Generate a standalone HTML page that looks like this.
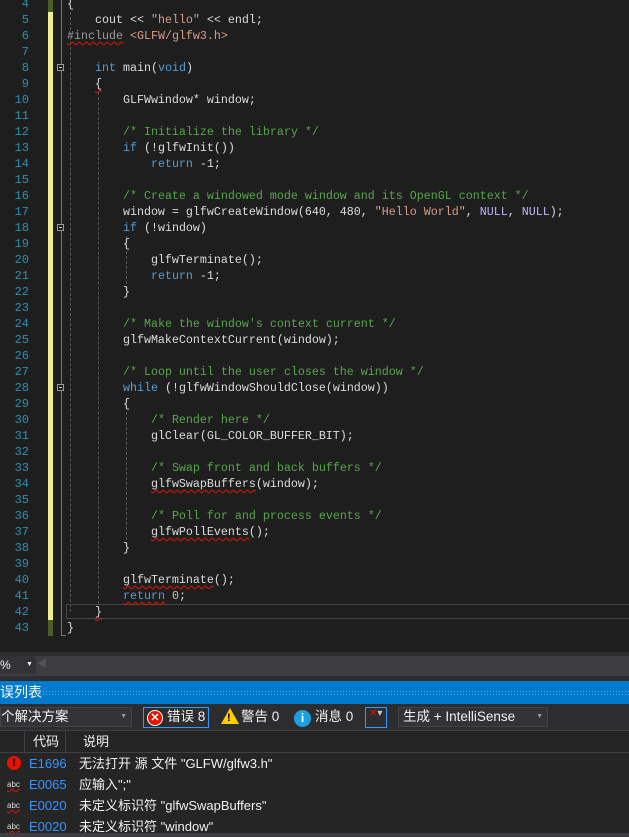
<!DOCTYPE html>
<html><head><meta charset="utf-8"><style>
body{margin:0;width:629px;height:837px;overflow:hidden;background:#1e1e1e;font-family:"Liberation Sans","Noto Sans CJK SC",sans-serif;position:relative}
.ed{position:absolute;left:0;top:0;width:629px;height:652px;overflow:hidden;background:#1e1e1e}
.ln{position:absolute;left:0;width:29px;text-align:right;color:#2b91af;font:12px/16px "Liberation Mono",monospace}
.cd{position:absolute;left:67px;white-space:pre;color:#dcdcdc;font:11.67px/16px "Liberation Mono",monospace}
.k{color:#569cd6}.s{color:#d69d85}.c{color:#57a64a}.p{color:#9b9b9b}.m{color:#beb7ff}.n{color:#b5cea8}
.sq{text-decoration:underline wavy #e51400;text-decoration-thickness:1px;text-underline-offset:2px}
.fold{position:absolute;left:57px;width:7px;height:7px;border:1px solid #999;box-sizing:border-box}
.fold:after{content:"";position:absolute;left:1px;top:2px;width:3px;height:1px;background:#ccc}
.g{position:absolute;width:0;border-left:1px dashed #555}
.row{position:absolute;left:0;width:629px;height:21px;font-size:13px;color:#f1f1f1;line-height:21px}
.code{position:absolute;left:29px;color:#3794ff}
.desc{position:absolute;left:79px}
</style></head><body>
<div class="ed">
<div style="position:absolute;left:48px;top:0;width:5px;height:12px;background:#4b5e2a"></div>
<div style="position:absolute;left:48px;top:12px;width:5px;height:608px;background:#efef91"></div>
<div style="position:absolute;left:48px;top:620px;width:5px;height:16px;background:#4b5e2a"></div>
<div style="position:absolute;left:61px;top:0;width:1px;height:636px;background:#777"></div>
<div style="position:absolute;left:61px;top:635px;width:5px;height:1px;background:#777"></div>
<div class="g" style="left:70px;top:12px;height:600px"></div>
<div class="g" style="left:98px;top:92px;height:512px"></div>
<div class="g" style="left:126px;top:236px;height:48px"></div>
<div class="g" style="left:126px;top:412px;height:128px"></div>
<div style="position:absolute;left:66px;top:604px;width:570px;height:15px;border:1px solid #464646;box-sizing:border-box"></div>
<div class="fold" style="top:64px;background:#1e1e1e"></div>
<div class="fold" style="top:224px;background:#1e1e1e"></div>
<div class="fold" style="top:384px;background:#1e1e1e"></div>
<div class="ln" style="top:-4px">4<br>5<br>6<br>7<br>8<br>9<br>10<br>11<br>12<br>13<br>14<br>15<br>16<br>17<br>18<br>19<br>20<br>21<br>22<br>23<br>24<br>25<br>26<br>27<br>28<br>29<br>30<br>31<br>32<br>33<br>34<br>35<br>36<br>37<br>38<br>39<br>40<br>41<br>42<br>43</div>
<div class="cd" style="top:-4px">{
    cout &lt;&lt; <span class="s">"hello"</span> &lt;&lt; endl;
<span class="p sq">#include</span> <span class="s">&lt;GLFW/glfw3.h&gt;</span>

    <span class="k">int</span> main(<span class="k">void</span>)
    <span class="sq">{</span>
        GLFWwindow* window;

        <span class="c">/* Initialize the library */</span>
        <span class="k">if</span> (!glfwInit())
            <span class="k">return</span> -1;

        <span class="c">/* Create a windowed mode window and its OpenGL context */</span>
        window = glfwCreateWindow(640, 480, <span class="s">"Hello World"</span>, <span class="m">NULL</span>, <span class="m">NULL</span>);
        <span class="k">if</span> (!window)
        {
            glfwTerminate();
            <span class="k">return</span> -1;
        }

        <span class="c">/* Make the window's context current */</span>
        glfwMakeContextCurrent(window);

        <span class="c">/* Loop until the user closes the window */</span>
        <span class="k">while</span> (!glfwWindowShouldClose(window))
        {
            <span class="c">/* Render here */</span>
            glClear(GL_COLOR_BUFFER_BIT);

            <span class="c">/* Swap front and back buffers */</span>
            <span class="sq">glfwSwapBuffers</span>(window);

            <span class="c">/* Poll for and process events */</span>
            <span class="sq">glfwPollEvents</span>();
        }

        <span class="sq">glfwTerminate</span>();
        <span class="k sq">return</span> <span class="n">0</span>;
    <span class="sq">}</span>
}</div>
</div>
<div style="position:absolute;left:0;top:652px;width:629px;height:4px;background:#2d2d30"></div>
<div style="position:absolute;left:0;top:656px;width:629px;height:20px;background:#3e3e42"></div>
<div style="position:absolute;left:0;top:656px;width:36px;height:18px;background:#333337;color:#f1f1f1;font-size:12px;line-height:18px">%<span style="position:absolute;left:26px;font-size:7px">▼</span></div>
<div style="position:absolute;left:37px;top:656px;color:#555;font-size:10px;line-height:18px">◀</div>
<div style="position:absolute;left:0;top:676px;width:629px;height:5px;background:#2d2d30"></div>
<div style="position:absolute;left:0;top:681px;width:629px;height:23px;background:#007acc;color:#fff;font-size:14px;line-height:23px">误列表<div style="position:absolute;left:30px;right:0;top:9px;height:5px;background-image:radial-gradient(#5aa8dd 0.6px,transparent 0.7px);background-size:3px 3px"></div></div>
<div style="position:absolute;left:0;top:704px;width:629px;height:26px;background:#2d2d30;color:#f1f1f1;font-size:13.5px;line-height:26px">
<div style="position:absolute;left:0;top:3px;width:132px;height:20px;background:#333337;border:1px solid #434346;box-sizing:border-box;line-height:18px">个解决方案<span style="position:absolute;right:4px;font-size:7px;color:#999">▼</span></div>
<div style="position:absolute;top:3px;height:21px;border:1px solid #3399ff;box-sizing:border-box;left:143px;width:66px"></div>
<div style="position:absolute;left:147px;top:6px;width:16px;height:16px;border-radius:50%;background:#e51400;border:1px solid #fff;box-sizing:border-box;color:#fff;font-size:11px;line-height:14px;text-align:center;font-weight:bold">✕</div>
<span style="position:absolute;left:167px">错误 8</span>
<div style="position:absolute;left:221px;top:4px;width:0;height:0;border-left:9px solid transparent;border-right:9px solid transparent;border-bottom:16px solid #ffcc00"></div>
<span style="position:absolute;left:227px;top:1px;font-size:11px;font-weight:bold;color:#000">!</span>
<span style="position:absolute;left:241px">警告 0</span>
<div style="position:absolute;top:6px;width:17px;height:17px;border-radius:50%;background:#1ba1e2;color:#fff;font-size:12px;line-height:17px;text-align:center;font-weight:bold;left:294px">i</div>
<span style="position:absolute;left:315px">消息 0</span>
<div style="position:absolute;left:365px;top:3px;width:22px;height:21px;border:1px solid #3399ff;box-sizing:border-box;color:#e51400;font-size:10px;line-height:12px;padding-left:3px">✕<span style="color:#ccc">▾</span></div>
<div style="position:absolute;left:398px;top:3px;width:150px;height:20px;background:#333337;border:1px solid #434346;box-sizing:border-box;line-height:18px;padding-left:4px">生成 + IntelliSense<span style="position:absolute;right:4px;font-size:7px;color:#999">▼</span></div>
</div>
<div style="position:absolute;left:0;top:730px;width:629px;height:23px;background:#252526;border-top:1px solid #3f3f46;border-bottom:1px solid #3f3f46;box-sizing:border-box;color:#f1f1f1;font-size:13px;line-height:21px">
<div style="position:absolute;left:24px;top:0;width:1px;height:21px;background:#3f3f46"></div>
<div style="position:absolute;left:65px;top:0;width:1px;height:21px;background:#3f3f46"></div>
<span style="position:absolute;left:33px">代码</span><span style="position:absolute;left:83px">说明</span></div>
<div style="position:absolute;left:0;top:753px;width:629px;height:84px;background:#252526"></div>
<div class="row" style="top:753px"><span style="position:absolute;left:7px;top:3px;width:14px;height:14px;border-radius:50%;background:#e51400;color:#000;font-size:11px;line-height:14px;text-align:center;font-weight:bold">!</span><span class="code">E1696</span><span class="desc">无法打开 源 文件 "GLFW/glfw3.h"</span></div>
<div class="row" style="top:774px"><span style="position:absolute;left:7px;font-size:8px;color:#ddd;text-decoration:underline wavy #e51400">abc</span><span class="code">E0065</span><span class="desc">应输入";"</span></div>
<div class="row" style="top:795px"><span style="position:absolute;left:7px;font-size:8px;color:#ddd;text-decoration:underline wavy #e51400">abc</span><span class="code">E0020</span><span class="desc">未定义标识符 "glfwSwapBuffers"</span></div>
<div class="row" style="top:816px"><span style="position:absolute;left:7px;font-size:8px;color:#ddd;text-decoration:underline wavy #e51400">abc</span><span class="code">E0020</span><span class="desc">未定义标识符 "window"</span></div>
<div style="position:absolute;left:0;top:833px;width:629px;height:4px;background:#3e3e42"></div>
</body></html>
